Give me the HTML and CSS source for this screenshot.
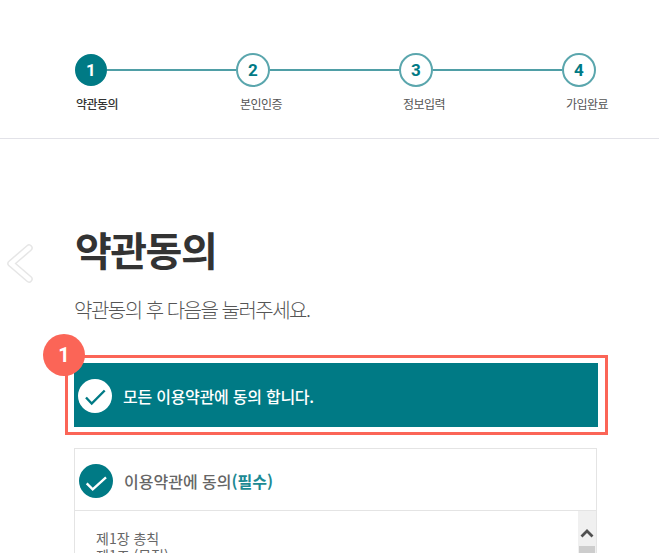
FILE: index.html
```html
<!DOCTYPE html>
<html lang="ko">
<head>
<meta charset="utf-8">
<title>약관동의</title>
<link rel="stylesheet" href="styles.css">
</head>
<body>
<header class="stepper">
  <div class="track">
    <span class="dot dot-on">1</span><span class="link"></span>
    <span class="dot">2</span><span class="link"></span>
    <span class="dot">3</span><span class="link"></span>
    <span class="dot">4</span>
  </div>
  <div class="labels">
    <span class="label label-first label-on">약관동의</span>
    <span class="label">본인인증</span>
    <span class="label">정보입력</span>
    <span class="label">가입완료</span>
  </div>
</header>
<svg class="prev" width="32" height="46" viewBox="0 0 32 46" aria-hidden="true"><path d="M25 7 L7 22.5 L25 38" fill="none" stroke="#e6e6e6" stroke-width="7.5" stroke-linecap="round" stroke-linejoin="round"/><path d="M25 7 L7 22.5 L25 38" fill="none" stroke="#fff" stroke-width="4.5" stroke-linecap="round" stroke-linejoin="round"/></svg>
<main class="content">
  <h1 class="title">약관동의</h1>
  <p class="sub">약관동의 후 다음을 눌러주세요.</p>
  <div class="callout">
    <span class="badge">1</span>
    <div class="all">
      <span class="check check-white"><svg width="24" height="24" viewBox="0 0 24 24"><path d="M3 13.5 L8.7 19.5 L21.7 6.5" fill="none" stroke="#007a85" stroke-width="2.4"/></svg></span>
      <span class="all-text">모든 이용약관에 동의 합니다.</span>
    </div>
  </div>
  <section class="terms">
    <div class="terms-head">
      <span class="check check-teal"><svg width="24" height="24" viewBox="0 0 24 24"><path d="M2.7 14.3 L8.7 20.3 L22 8.3" fill="none" stroke="#fff" stroke-width="2.4"/></svg></span>
      <span class="terms-title">이용약관에 동의<b class="req">(필수)</b></span>
    </div>
    <div class="terms-body">
      <div class="terms-text">제1장 총칙<br>제1조 (목적)</div>
      <div class="scrollbar">
        <svg class="arrow" width="14" height="10" viewBox="0 0 14 10"><path d="M1.5 8.5 L7 3 L12.5 8.5" fill="none" stroke="#505050" stroke-width="2.8"/></svg>
        <span class="thumb"></span>
      </div>
    </div>
  </section>
</main>
</body>
</html>
```
FILE: styles.css
```css
* { box-sizing: border-box; }
html, body { margin: 0; height: 553px; overflow: hidden; background: #fff; }
body { position: relative; font-family: "Noto Sans CJK KR", "Noto Sans", sans-serif; color: #333; }

.stepper { height: 139px; border-bottom: 1px solid #e2e2e8; padding: 53px 63px 0 75px; }
.track { display: flex; align-items: center; height: 33px; }
.dot { flex: none; width: 34px; height: 34px; border-radius: 50%; border: 2px solid #5aa6ad; background: #fff; color: #007a85; font: 700 17px/30px "Roboto", sans-serif; text-align: center; }
.dot-on { width: 32px; height: 32px; background: #007a85; border-color: #007a85; color: #fff; line-height: 28px; }
.link { flex: 1; height: 2px; background: #4f9ea6; }
.labels { display: flex; justify-content: space-between; margin-top: 9px; }
.label { width: 34px; padding-left: 4px; white-space: nowrap; font-size: 12px; line-height: 18px; letter-spacing: -0.5px; color: #555; }
.label-first { width: 32px; padding-left: 1px; }
.label-on { color: #333; font-weight: 500; }

.prev { position: absolute; left: 4px; top: 241px; }

.content { padding: 82px 62px 0 74px; }
.title { margin: 0 0 0 1px; font-size: 40px; line-height: 56px; font-weight: 700; letter-spacing: -1.5px; color: #333; }
.sub { margin: 18px 0 0; font-size: 20px; line-height: 30px; font-weight: 300; letter-spacing: -1.5px; color: #555; }

.callout { position: relative; margin: 30px 0 0 -9px; width: 543px; height: 80px; border: 3px solid #fb6557; padding: 5px 7px 5px 6px; }
.badge { position: absolute; left: -25px; top: -24px; width: 42px; height: 42px; border-radius: 50%; background: #fb6557; color: #fff; font: 700 20px/42px "Roboto", sans-serif; text-align: center; }
.all { height: 64px; background: #007a85; display: flex; align-items: center; padding: 2px 0 0 4px; gap: 11px; }
.check { flex: none; width: 34px; height: 34px; border-radius: 50%; display: flex; align-items: center; justify-content: center; }
.check-white { background: #fff; }
.check-teal { background: #007a85; }
.all-text { color: #fff; font-size: 16px; font-weight: 500; letter-spacing: -0.25px; line-height: 24px; }

.terms { margin-top: 13px; width: 523px; border: 1px solid #e4e4e4; border-bottom: 0; }
.terms-head { height: 62px; display: flex; align-items: center; padding: 2px 0 0 4px; gap: 11px; border-bottom: 1px solid #e4e4e4; }
.terms-title { font-size: 16px; font-weight: 500; letter-spacing: 0; color: #666; }
.req { font-weight: 700; color: #1c8a94; }
.terms-body { display: flex; height: 42px; overflow: hidden; }
.terms-text { flex: 1; padding: 19px 0 0 21px; font-size: 14px; line-height: 17px; color: #666; }
.scrollbar { flex: none; width: 18px; background: #f0f0f0; display: flex; flex-direction: column; align-items: center; padding-top: 17px; gap: 8px; }
.arrow { flex: none; }
.thumb { flex: none; width: 16px; height: 60px; background: #cdcdcd; }
```
